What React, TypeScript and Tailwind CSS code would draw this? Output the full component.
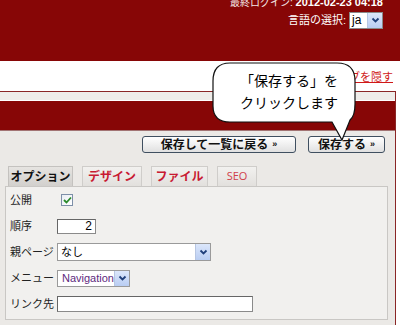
import React from "react";

const Chevron = () => (
  <svg width="9" height="7" viewBox="0 0 9 7">
    <path d="M1.5 1.5 L4.5 4.5 L7.5 1.5" fill="none" stroke="#1f3f7a" strokeWidth="1.8" />
  </svg>
);

const DropBtn = () => (
  <div className="w-[15px] shrink-0 h-full flex items-center justify-center bg-gradient-to-b from-[#dce7fb] to-[#b9cdf2] border-l border-[#b7c6e2]">
    <Chevron />
  </div>
);

const Label = ({ children }: { children: React.ReactNode }) => (
  <span className="w-[47px] shrink-0 whitespace-nowrap text-[11px]">{children}</span>
);

export default function App() {
  return (
    <div className="relative w-[400px] h-[325px] overflow-hidden bg-white font-['Liberation_Sans','Noto_Sans_CJK_JP',sans-serif] text-[12px] whitespace-nowrap">
      {/* header */}
      <div className="h-[61px] bg-[#870606] flex flex-col items-end pr-[17px] text-white">
        <div className="-mt-[5px] h-[14px] leading-[14px] text-[10px] text-[#f3e6e6]">
          最終ログイン: <span className="font-bold text-[11px] text-white">2012-02-23 04:18</span>
        </div>
        <div className="mt-[3px] flex items-center gap-[3px] text-[11px]">
          <span>言語の選択:</span>
          <div className="w-[34px] h-[17px] bg-white border border-[#8a8a8a] flex items-stretch">
            <div className="flex-1 text-black text-[12px] leading-[15px] pl-[2px]">ja</div>
            <DropBtn />
          </div>
        </div>
      </div>

      {/* white band */}
      <div className="h-[30px] flex justify-end items-start pr-[7px] pt-[10px]">
        <span className="text-[11px] leading-[12px] text-[#d01818] underline">タブを隠す</span>
      </div>

      {/* panel */}
      <div className="w-[396px] border-t border-r border-[#8a2626]">
        <div className="h-[8px] bg-[#eeece9]" />
        <div className="h-[1px] bg-white" />
        <div className="h-[29px] bg-[#870606]" />
        <div className="h-[1px] bg-[#a27474]" />
        <div className="h-[194px] bg-[#ebe9e6] flex flex-col">
          <div className="pt-[5px] pr-[10px] flex justify-end gap-[12px]">
            <div className="w-[154px] h-[17px] border border-[#3f4f60] rounded-[3px] bg-gradient-to-b from-white to-[#e0e0e0] flex items-center justify-center font-bold text-[12px] text-[#111]">
              保存して一覧に戻る<span className="text-[9px] ml-[4px]">»</span>
            </div>
            <div className="w-[77px] h-[17px] border border-[#3f4f60] rounded-[3px] bg-gradient-to-b from-white to-[#e0e0e0] flex items-center justify-center font-bold text-[12px] text-[#111]">
              保存する<span className="text-[9px] ml-[4px]">»</span>
            </div>
          </div>

          {/* tabs */}
          <div className="mt-[13px] pl-[8px] flex gap-[9px] h-[20px]">
            <div className="w-[65px] h-full border border-b-0 border-[#c4c2bf] bg-gradient-to-b from-[#e6e4e1] to-[#d2d0cd] flex items-center justify-center font-bold text-[12px] text-[#111]">
              オプション
            </div>
            <div className="w-[60px] h-full border border-b-0 border-[#cfcdca] bg-gradient-to-b from-[#f2f1ef] to-[#e2e0dd] flex items-center justify-center font-bold text-[12px] text-[#c81a32]">
              デザイン
            </div>
            <div className="w-[57px] h-full border border-b-0 border-[#cfcdca] bg-gradient-to-b from-[#f2f1ef] to-[#e2e0dd] flex items-center justify-center font-bold text-[12px] text-[#c81a32]">
              ファイル
            </div>
            <div className="w-[40px] h-full border border-b-0 border-[#cfcdca] bg-gradient-to-b from-[#f2f1ef] to-[#e2e0dd] flex items-center justify-center text-[11px] text-[#d0404a] font-['Open_Sans',sans-serif]">
              SEO
            </div>
          </div>

          {/* content box */}
          <div className="ml-[5px] w-[383px] h-[134px] border border-[#c9c7c4] bg-[#f1f0ee] pl-[4px] text-[#222]">
            <div className="h-[26px] flex items-center">
              <Label>公開</Label>
              <div className="ml-[4px] w-[12px] h-[12px] shrink-0 border border-[#7d8fa8] bg-gradient-to-br from-[#e8edf3] to-white flex items-center justify-center">
                <svg width="9" height="8" viewBox="0 0 9 8">
                  <path d="M1 4 L3.5 6.5 L8 1.5" fill="none" stroke="#2a8a2a" strokeWidth="1.8" />
                </svg>
              </div>
            </div>
            <div className="h-[26px] flex items-center">
              <Label>順序</Label>
              <div className="w-[39px] h-[15px] shrink-0 border border-[#8a8a8a] border-t-[#666] border-l-[#666] bg-white text-right pr-[3px] leading-[13px] text-[12px] text-black">
                2
              </div>
            </div>
            <div className="h-[26px] flex items-center">
              <Label>親ページ</Label>
              <div className="w-[154px] h-[18px] shrink-0 border border-[#9a9a9a] bg-white flex items-stretch">
                <div className="flex-1 pl-[3px] leading-[16px] text-[11px] text-black">なし</div>
                <DropBtn />
              </div>
            </div>
            <div className="h-[26px] flex items-center">
              <Label>メニュー</Label>
              <div className="w-[73px] h-[17px] shrink-0 border border-[#9a9a9a] bg-white flex items-stretch overflow-hidden">
                <div className="flex-1 pl-[4px] leading-[15px] text-[11px] text-[#5e2a7e] overflow-hidden">Navigation</div>
                <DropBtn />
              </div>
            </div>
            <div className="h-[26px] flex items-center">
              <Label>リンク先</Label>
              <div className="w-[196px] h-[16px] shrink-0 border border-[#8a8a8a] border-t-[#666] border-l-[#666] bg-white" />
            </div>
          </div>
        </div>
      </div>

      {/* callout bubble */}
      <svg className="absolute left-[210px] top-[60px]" width="150" height="85" viewBox="0 0 150 85">
        <path
          d="M20 3 H127 Q145 3 145 21 V44 Q145 56 140 60 L132 80 L122 62 H20 Q3 62 3 46 V21 Q3 3 20 3 Z"
          fill="white"
          stroke="#111"
          strokeWidth="1.2"
        />
      </svg>
      <div className="absolute left-[218px] top-[69px] w-[142px] text-center text-[14px] leading-[22px] text-black font-['Noto_Sans_CJK_JP',sans-serif]">
        <div>「保存する」を</div>
        <div>クリックします</div>
      </div>
    </div>
  );
}
